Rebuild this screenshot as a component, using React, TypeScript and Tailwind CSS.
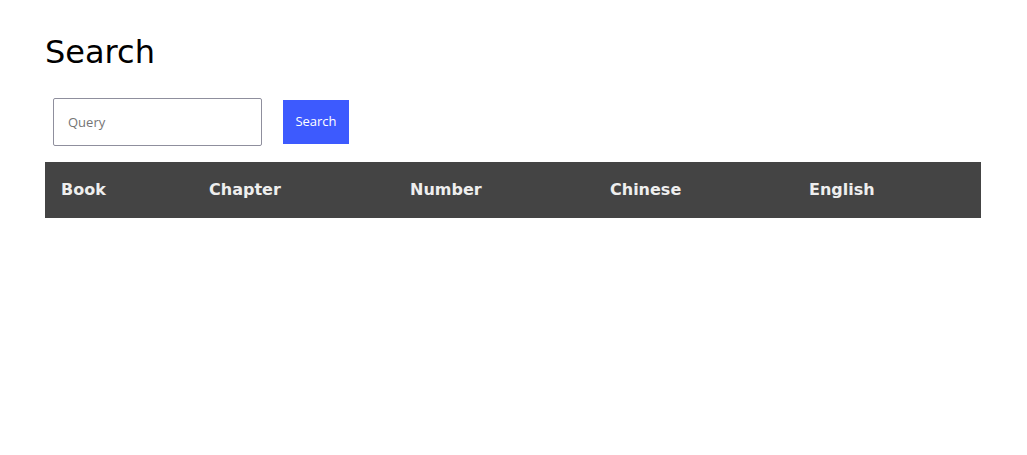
import React from "react";

const columns = ["Book", "Chapter", "Number", "Chinese", "English"];

export default function App() {
  return (
    <div className="min-h-[455px] bg-white px-[45px] pt-[34px] font-['DejaVu_Sans',sans-serif]">
      <h1 className="text-[32px] leading-[37px] text-black">Search</h1>
      <form
        className="mt-[27px] flex items-center gap-[21px] pl-2"
        onSubmit={(e) => e.preventDefault()}
      >
        <input
          type="text"
          placeholder="Query"
          className="h-[48px] w-[209px] rounded-[2px] border border-[#8f8f9d] px-[14px] font-['Open_Sans',sans-serif] text-[13px] text-black outline-none placeholder:text-[#757575]"
        />
        <button
          type="submit"
          className="h-[44px] w-[66px] bg-[#3d5afe] font-['Open_Sans',sans-serif] text-[13px] text-white"
        >
          Search
        </button>
      </form>
      <div className="mt-4 w-[936px]">
        <div className="grid h-[56px] grid-cols-[148px_201px_200px_199px_188px] items-center bg-[#444444]">
          {columns.map((c) => (
            <div key={c} className="px-4 text-[16px] font-bold text-[#eeeeee]">
              {c}
            </div>
          ))}
        </div>
      </div>
    </div>
  );
}
